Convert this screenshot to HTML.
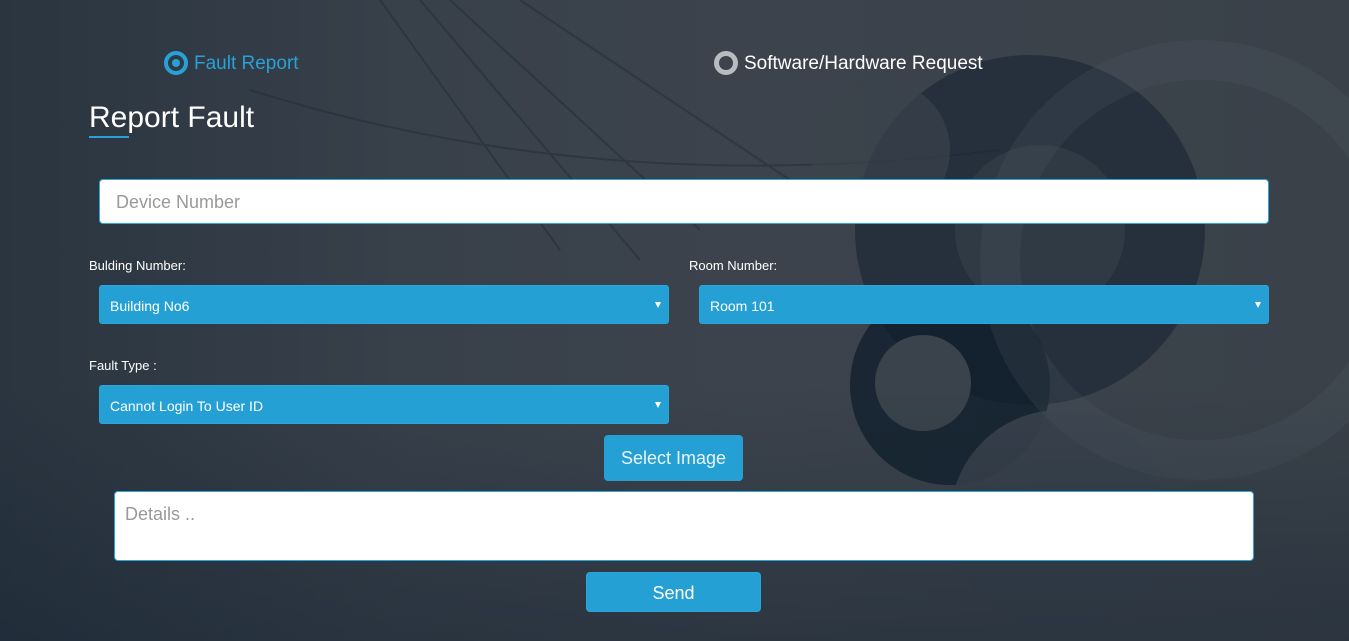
<!DOCTYPE html>
<html><head><style>
*{box-sizing:border-box;margin:0;padding:0}
body{width:1349px;height:641px;overflow:hidden;font-family:"Liberation Sans",Arial,sans-serif;position:relative;background:#3b4149}
.bg{position:absolute;inset:0;background:linear-gradient(90deg,#2a3540 0%,#38404a 30%,#3c434c 55%,#3a4149 100%)}
.bg2{position:absolute;inset:0;background:linear-gradient(180deg,rgba(0,0,0,0) 60%,rgba(15,30,45,.35) 100%)}
.abs{position:absolute}
.radio{position:absolute;top:51px;width:24px;height:24px;border-radius:50%}
.lbl{position:absolute;font-size:14px;color:#fff}
.sel{position:absolute;height:39px;background:#25a0d5;border:1px solid #2ba6db;border-radius:3px;color:#fff;font-size:14px;padding:12px 10px 0}
.sel:after{content:"";position:absolute;right:7px;top:16px;border-left:3.5px solid transparent;border-right:3.5px solid transparent;border-top:6px solid #fff}
.inp{position:absolute;background:#fff;border:1px solid #2ba6db;border-radius:4px;color:#999}
.btn{position:absolute;background:#25a0d5;border-radius:4px;color:#fff;text-align:center}
</style></head><body>
<div class="bg"></div>
<svg class="abs" style="left:0;top:0" width="1349" height="641">
<g fill="none" stroke="#1c2a36" stroke-width="2" opacity=".45">
<path d="M420 0 L640 260"/><path d="M450 0 L700 230"/><path d="M380 0 L560 250"/><path d="M520 0 L820 200"/>
<path d="M250 90 Q600 200 1000 150"/>
</g>
<circle cx="1030" cy="230" r="175" fill="#142331" opacity=".55"/>
<circle cx="950" cy="385" r="100" fill="#0f1e2b" opacity=".75"/>
<circle cx="923" cy="383" r="48" fill="#3a434c"/>
<circle cx="1040" cy="230" r="85" fill="#3a434c" opacity=".5"/>
<circle cx="880" cy="150" r="70" fill="#3a434c" opacity=".7"/>
<circle cx="1060" cy="520" r="110" fill="#3a434c" opacity=".9"/>
<circle cx="1200" cy="260" r="200" fill="none" stroke="#55606a" stroke-width="40" opacity=".2"/>
</svg>
<div class="bg2"></div>
<div class="radio" style="left:164px;border:4px solid #27a1d7"><div style="position:absolute;left:4px;top:4px;width:8px;height:8px;border-radius:50%;background:#27a1d7"></div></div>
<div class="abs" style="left:194px;top:53px;font-size:19px;color:#27a1d7">Fault Report</div>
<div class="radio" style="left:714px;border:5px solid #b8bcc0"></div>
<div class="abs" style="left:744px;top:53px;font-size:19px;color:#fff">Software/Hardware Request</div>
<div class="abs" style="left:89px;top:101px;font-size:30px;color:#fff">Report Fault</div>
<div class="abs" style="left:89px;top:136px;width:40px;height:2px;background:#27a1d7"></div>
<div class="inp" style="left:99px;top:179px;width:1170px;height:45px;font-size:18px;padding:12px 16px">Device Number</div>
<div class="lbl" style="left:89px;top:258px;font-size:13px">Bulding Number:</div>
<div class="lbl" style="left:689px;top:258px;font-size:13px">Room Number:</div>
<div class="sel" style="left:99px;top:285px;width:570px">Building No6</div>
<div class="sel" style="left:699px;top:285px;width:570px">Room 101</div>
<div class="lbl" style="left:89px;top:358px;font-size:13px">Fault Type :</div>
<div class="sel" style="left:99px;top:385px;width:570px">Cannot Login To User ID</div>
<div class="btn" style="left:604px;top:435px;width:139px;height:46px;font-size:18px;line-height:46px;color:#e8f4fa">Select Image</div>
<div class="inp" style="left:114px;top:491px;width:1140px;height:70px;font-size:18px;padding:12px 10px">Details ..</div>
<div class="btn" style="left:586px;top:572px;width:175px;height:40px;font-size:18px;line-height:40px;border:1px solid #2ba6db">Send</div>
</body></html>
